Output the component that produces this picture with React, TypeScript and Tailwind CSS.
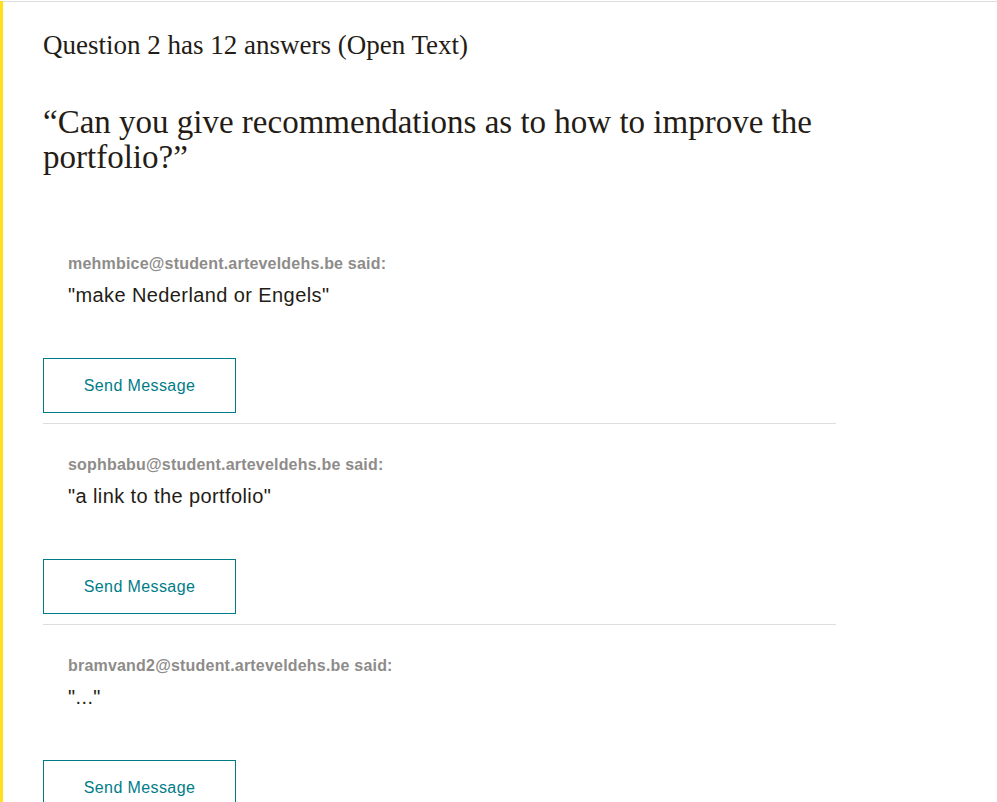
const answers = [
  { email: "mehmbice@student.arteveldehs.be", text: '"make Nederland or Engels"' },
  { email: "sophbabu@student.arteveldehs.be", text: '"a link to the portfolio"' },
  { email: "bramvand2@student.arteveldehs.be", text: '"..."' },
];

function Answer({ email, text }: { email: string; text: string }) {
  return (
    <div className="border-b border-[#dedddc] pb-[10px]">
      <div className="pl-[25px] pt-[31px]">
        <p className="text-[16px] font-bold leading-[20px] tracking-[0.2px] text-[#8e8c8a]">{email} said:</p>
        <p className="mt-[10px] text-[20px] leading-[22px] tracking-[0.4px] text-[#241c15]">{text}</p>
      </div>
      <button className="mt-[52px] h-[55px] w-[193px] border border-[#007c89] text-[16px] tracking-[0.4px] text-[#007c89]">
        Send Message
      </button>
    </div>
  );
}

export default function App() {
  return (
    <div className="min-h-[802px] border-l-[3px] border-[#ffe01b] bg-white font-['Liberation_Sans',Arial,sans-serif]">
      <div className="border-t border-[#dedddc] mt-px pl-[40px] pt-[28px]">
        <h2 className="font-['Liberation_Serif',serif] text-[27px] leading-[30px] text-[#241c15]">
          Question 2 has 12 answers (Open Text)
        </h2>
        <h1 className="mt-[45px] w-[793px] font-['Liberation_Serif',serif] text-[33px] leading-[35px] text-[#241c15]">
          “Can you give recommendations as to how to improve the portfolio?”
        </h1>
        <div className="mt-[48px] w-[793px]">
          {answers.map((a) => (
            <Answer key={a.email} {...a} />
          ))}
        </div>
      </div>
    </div>
  );
}
